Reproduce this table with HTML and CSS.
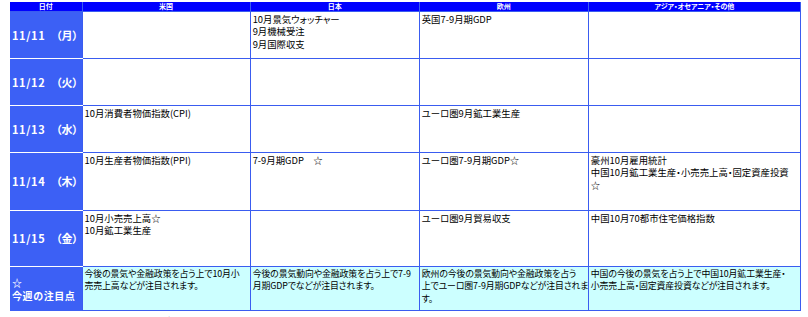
FILE: index.html
```html
<!DOCTYPE html>
<html lang="ja">
<head>
<meta charset="utf-8">
<title>今週の主な経済指標</title>
<link rel="stylesheet" href="styles.css">
</head>
<body>
<table class="sched">
  <colgroup>
    <col class="c-day"><col class="c-wd"><col class="c-us"><col class="c-jp"><col class="c-eu"><col class="c-as">
  </colgroup>
  <thead>
    <tr class="r-head">
      <th colspan="2">日付</th>
      <th>米国</th>
      <th>日本</th>
      <th>欧州</th>
      <th>アジア・オセアニア・その他</th>
    </tr>
  </thead>
  <tbody>
    <tr class="r-std">
      <td class="day">11/11</td><td class="wd">（月）</td>
      <td></td>
      <td>10月景気ウォッチャー<br>9月機械受注<br>9月国際収支</td>
      <td>英国7-9月期GDP</td>
      <td></td>
    </tr>
    <tr class="r-std">
      <td class="day">11/12</td><td class="wd">（火）</td>
      <td></td><td></td><td></td><td></td>
    </tr>
    <tr class="r-std">
      <td class="day">11/13</td><td class="wd">（水）</td>
      <td>10月消費者物価指数(CPI)</td>
      <td></td>
      <td>ユーロ圏9月鉱工業生産</td>
      <td></td>
    </tr>
    <tr class="r-thu">
      <td class="day">11/14</td><td class="wd">（木）</td>
      <td>10月生産者物価指数(PPI)</td>
      <td>7-9月期GDP　☆</td>
      <td>ユーロ圏7-9月期GDP☆</td>
      <td>豪州10月雇用統計<br>中国10月鉱工業生産・小売売上高・固定資産投資<br>☆</td>
    </tr>
    <tr class="r-fri">
      <td class="day">11/15</td><td class="wd">（金）</td>
      <td>10月小売売上高☆<br>10月鉱工業生産</td>
      <td></td>
      <td>ユーロ圏9月貿易収支</td>
      <td>中国10月70都市住宅価格指数</td>
    </tr>
    <tr class="r-note">
      <td class="day note-head" colspan="2">☆<br>今週の注目点</td>
      <td class="note">今後の景気や金融政策を占う上で10月小<br>売売上高などが注目されます。</td>
      <td class="note">今後の景気動向や金融政策を占う上で7-9<br>月期GDPでなどが注目されます。</td>
      <td class="note">欧州の今後の景気動向や金融政策を占う<br>上でユーロ圏7-9月期GDPなどが注目されま<br>す。</td>
      <td class="note">中国の今後の景気を占う上で中国10月鉱工業生産・<br>小売売上高・固定資産投資などが注目されます。</td>
    </tr>
  </tbody>
</table>
<p class="footnote">※ 発表予定は変更される場合があります。</p>
</body>
</html>
```

FILE: styles.css
```css
html, body {
  margin: 0;
  background: #ffffff;
}
body {
  padding: 2px 0 0 10px;
  font-family: "Noto Sans CJK JP", "Noto Sans", sans-serif;
  font-feature-settings: "palt";
  color: #000000;
  height: 315px;
  overflow: hidden;
}
.sched {
  border-collapse: collapse;
  table-layout: fixed;
  width: 791px;
}
.c-day { width: 40px; }
.c-wd { width: 32px; }
.c-us { width: 168px; }
.c-jp { width: 169px; }
.c-eu { width: 169px; }
.c-as { width: 212px; }

.r-head th {
  height: 9px;
  padding: 0;
  background: #0000ff;
  color: #ffffff;
  font-size: 7px;
  line-height: 9px;
  font-weight: bold;
  text-align: center;
  border: 1px solid #3a5cf0;
  border-top: 0;
}
.r-head th:first-child { border-left: 0; }

.sched td {
  padding: 1px 1px 1px 2px;
  font-size: 9.4px;
  line-height: 12.4px;
  vertical-align: top;
  border: 1px solid #3a5cf0;
  background: #ffffff;
  overflow: hidden;
}
.r-std td { height: 44px; }
.r-thu td { height: 55px; }
.r-fri td { height: 53px; }
.r-note td { height: 41px; }

.sched td.day,
.sched td.wd {
  background: repeating-conic-gradient(#2c52f4 0 25%, #4c6ef6 0 50%) 0 0 / 2px 2px;
  color: #ffffff;
  font-weight: bold;
  font-size: 11px;
  vertical-align: middle;
  border: 0;
  border-bottom: 1px solid #ffffff;
}
.sched td.day {
  padding-left: 2px;
  letter-spacing: 0.6px;
}
.sched td.wd {
  padding-left: 6px;
}
.sched td.note-head {
  font-size: 10px;
  line-height: 13px;
  padding-left: 2px;
  border-bottom: 0;
}
.sched td.note {
  background: #ccffff;
  padding-top: 1px;
  font-size: 8.9px;
  letter-spacing: -0.1px;
  white-space: nowrap;
}
.footnote {
  margin: 5px 0 0 47px;
  font-size: 10px;
  line-height: 12px;
  color: #333333;
}
```
